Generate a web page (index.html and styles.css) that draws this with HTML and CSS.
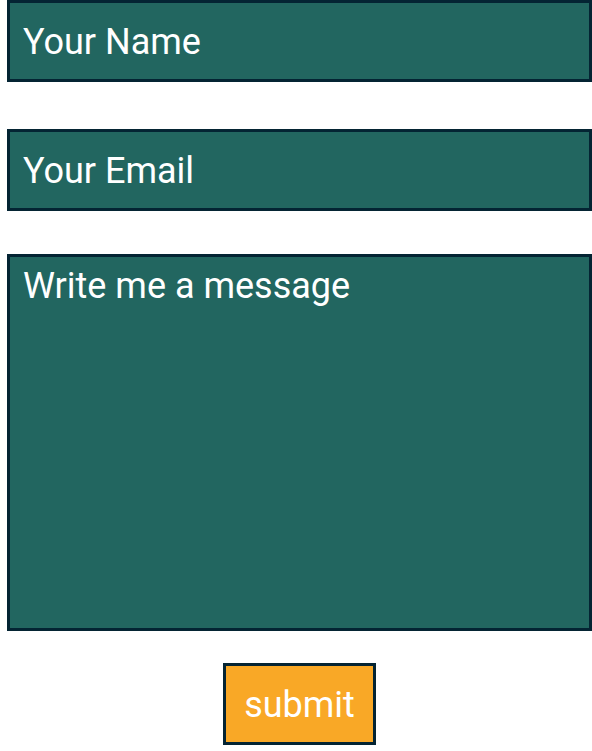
FILE: index.html
```html
<!DOCTYPE html>
<html lang="en">
<head>
<meta charset="utf-8">
<meta name="viewport" content="width=device-width, initial-scale=1">
<title>Contact</title>
<link rel="stylesheet" href="styles.css">
</head>
<body>
<form class="contact">
  <div class="lines">
    <input class="field" type="text" name="name" placeholder="Your Name" aria-label="Your Name">
    <input class="field" type="email" name="email" placeholder="Your Email" aria-label="Your Email">
  </div>
  <textarea class="field message" name="message" placeholder="Write me a message" aria-label="Write me a message"></textarea>
  <button class="submit" type="submit">submit</button>
</form>
</body>
</html>
```

FILE: styles.css
```css
* {
  box-sizing: border-box;
}

body {
  margin: 0;
  background: #fff;
}

.contact {
  display: flex;
  flex-direction: column;
  padding: 0 0 6px 7px;
}

.lines {
  display: grid;
  gap: 47px;
  margin-bottom: 43px;
}

.field,
.submit {
  margin: 0;
  border: 3px solid #042433;
  border-radius: 0;
  color: #fff;
  font-family: Aptos, Roboto, sans-serif;
  font-size: 36px;
  line-height: 44px;
}

.field {
  width: 100%;
  height: 82px;
  padding: 2px 13px 0;
  background: #226660;
  outline: none;
}

.field::placeholder {
  color: #fff;
  opacity: 1;
}

.message {
  height: 377px;
  margin-bottom: 32px;
  padding: 7px 13px;
  resize: none;
}

.submit {
  align-self: center;
  height: 82px;
  padding: 2px 18px 0;
  background: #f9a826;
}
```
